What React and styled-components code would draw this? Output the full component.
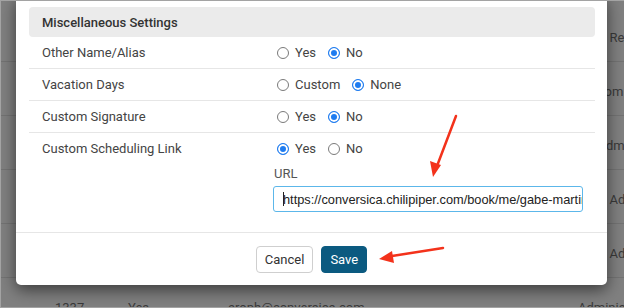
import React from "react"
import styled, { createGlobalStyle } from "styled-components"

const GlobalStyle = createGlobalStyle`
  html, body {
    margin: 0;
    padding: 0;
    background: #808080;
  }
  body {
    font-family: Roboto, "Liberation Sans", Arial, sans-serif;
  }
`

const Frame = styled.div`
  position: relative;
  width: 624px;
  height: 308px;
  box-sizing: border-box;
  border: 1px solid #a3a3a3;
  border-right: none;
  background: #808080;
  overflow: hidden;
`

const Backdrop = styled.div`
  display: flex;
  flex-direction: column;
  padding-top: 7px;
`

const BgRow = styled.div`
  display: grid;
  grid-template-columns: 73px 100px 350px 1fr;
  align-items: center;
  box-sizing: border-box;
  height: 54px;
  padding: 6px 0 0 54px;
  border-bottom: 1px solid #737373;
  font-size: 13px;
  color: #3a3a3a;
  white-space: nowrap;
`

const Modal = styled.div`
  position: absolute;
  left: 15px;
  top: -6px;
  width: 591px;
  height: 290px;
  background: #fff;
  border-radius: 5px;
  box-shadow: 0 5px 16px rgba(0, 0, 0, 0.55);
  display: flex;
  flex-direction: column;
`

const Body = styled.div`
  flex: 1;
  padding: 12px 12px 0 13px;
`

const SectionHeader = styled.div`
  height: 30px;
  display: flex;
  align-items: center;
  padding-left: 13px;
  background: #ebebeb;
  border-radius: 4px;
  font-size: 13px;
  font-weight: 500;
  color: #333;
`

const Row = styled.div`
  display: grid;
  grid-template-columns: 231px 1fr;
  padding-left: 13px;
  min-height: 31px;
  border-bottom: ${({ $last }) => ($last ? "none" : "1px solid #e6e6e6")};
  font-size: 13px;
  color: #444;
`

const Label = styled.div`
  height: 31px;
  display: flex;
  align-items: center;
`

const Field = styled.div`
  display: flex;
  flex-direction: column;
`

const RadioGroup = styled.div`
  height: 31px;
  display: flex;
  align-items: center;
  padding-left: 4px;
`

const Option = styled.label`
  display: flex;
  align-items: center;
  margin-right: 12px;
  color: #444;
`

const Radio = styled.span`
  width: 12px;
  height: 12px;
  box-sizing: border-box;
  border-radius: 50%;
  margin-right: 6px;
  border: 1px solid ${({ $on }) => ($on ? "#1f7cf0" : "#7a7a7a")};
  background: ${({ $on }) => ($on ? "#1f7cf0" : "#fff")};
  box-shadow: ${({ $on }) => ($on ? "inset 0 0 0 2px #fff" : "none")};
`

const UrlLabel = styled.div`
  margin-top: 2px;
  font-size: 13px;
  color: #555;
  padding-left: 1px;
`

const UrlInput = styled.div`
  margin-top: 5px;
  width: 310px;
  height: 26px;
  box-sizing: border-box;
  border: 1.5px solid #5cb7ea;
  border-radius: 3px;
  padding: 0 9px;
  display: flex;
  align-items: center;
  overflow: hidden;
  white-space: nowrap;
  font-family: "Liberation Sans", Arial, sans-serif;
  font-size: 12.8px;
  color: #222;
`

const Caret = styled.span`
  display: inline-block;
  flex: none;
  width: 1px;
  height: 14px;
  background: #222;
  margin-right: -1px;
`

const Footer = styled.div`
  border-top: 1px solid #e6e6e6;
  height: 52px;
  display: flex;
  justify-content: center;
  align-items: center;
  gap: 8px;
`

const Button = styled.button`
  height: 27px;
  padding: 0 8px;
  border-radius: 4px;
  font-family: inherit;
  font-size: 13px;
  cursor: pointer;
  border: 1px solid ${({ $primary }) => ($primary ? "#0b5a80" : "#cfcfcf")};
  background: ${({ $primary }) => ($primary ? "#0b5a80" : "#fff")};
  color: ${({ $primary }) => ($primary ? "#fff" : "#333")};
`

const Arrows = styled.svg`
  position: absolute;
  left: -1px;
  top: -1px;
  pointer-events: none;
`

const bgRows = [
  ["", "", "", "Lead Rep"],
  ["", "", "", "Custom Sales"],
  ["", "", "", "Co-Admin"],
  ["", "", "", "Lead Admin"],
  ["", "", "", "Lead Admin"],
  ["1337", "Yes", "aroph@conversica.com", "Administrator"],
]

const settings = [
  { label: "Other Name/Alias", options: ["Yes", "No"], value: "No" },
  { label: "Vacation Days", options: ["Custom", "None"], value: "None" },
  { label: "Custom Signature", options: ["Yes", "No"], value: "No" },
]

const Radios = ({ options, value }) => (
  <RadioGroup>
    {options.map((o) => (
      <Option key={o}>
        <Radio $on={o === value} />
        {o}
      </Option>
    ))}
  </RadioGroup>
)

const App = () => (
  <>
    <GlobalStyle />
    <Frame>
      <Backdrop>
        {bgRows.map((r, i) => (
          <BgRow key={i}>
            {r.map((c, j) => (
              <span key={j}>{c}</span>
            ))}
          </BgRow>
        ))}
      </Backdrop>

      <Modal>
        <Body>
          <SectionHeader>Miscellaneous Settings</SectionHeader>
          {settings.map((s) => (
            <Row key={s.label}>
              <Label>{s.label}</Label>
              <Radios options={s.options} value={s.value} />
            </Row>
          ))}
          <Row $last>
            <Label>Custom Scheduling Link</Label>
            <Field>
              <Radios options={["Yes", "No"]} value="Yes" />
              <UrlLabel>URL</UrlLabel>
              <UrlInput>
                <Caret />
                https://conversica.chilipiper.com/book/me/gabe-martinez
              </UrlInput>
            </Field>
          </Row>
        </Body>
        <Footer>
          <Button>Cancel</Button>
          <Button $primary>Save</Button>
        </Footer>
      </Modal>

      <Arrows width="624" height="308" viewBox="0 0 624 308">
        <g stroke="#f3321b" strokeWidth="2.5" strokeLinecap="round" fill="#f3321b">
          <line x1="456" y1="116" x2="437" y2="166" />
          <polygon points="433,177 430,161 441,165" stroke="none" />
          <line x1="443" y1="248" x2="392" y2="256" />
          <polygon points="379,259 392,251 394,263" stroke="none" />
        </g>
      </Arrows>
    </Frame>
  </>
)

export default App
